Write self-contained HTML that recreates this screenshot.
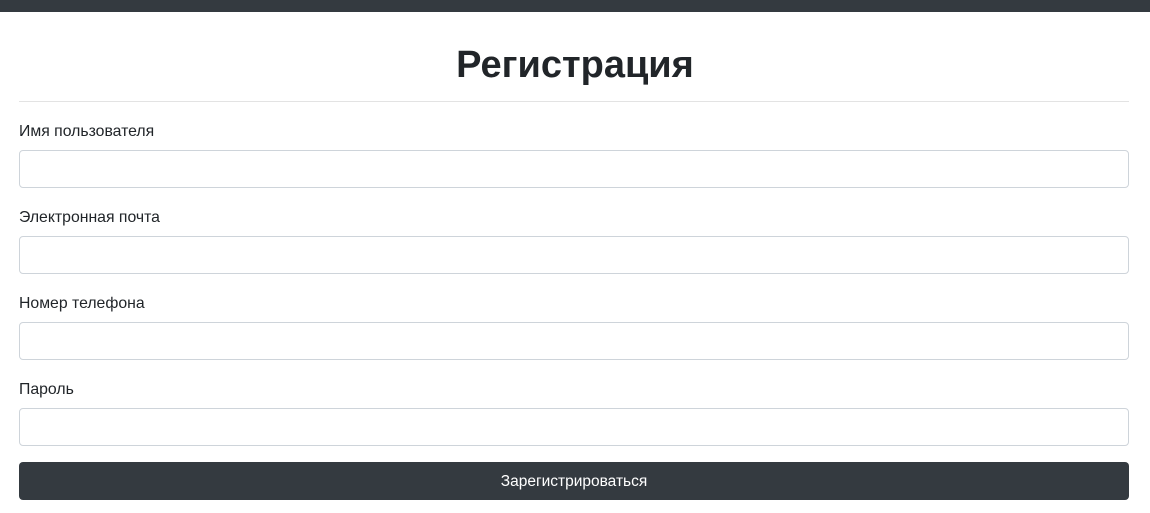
<!DOCTYPE html>
<html><head><meta charset="utf-8"><style>
body{margin:0;width:1150px;height:513px;background:#fff;font-family:"Liberation Sans",sans-serif;color:#212529;overflow:hidden;position:relative}
.bar{position:absolute;left:0;top:0;width:1150px;height:12px;background:#343a40}
h1{position:absolute;left:0;width:1150px;top:41px;margin:0;text-align:center;font-size:38px;font-weight:bold;line-height:48px;letter-spacing:0}
.hr{position:absolute;left:19px;width:1110px;top:101px;height:1px;background:#e3e3e3}
.l{position:absolute;left:19px;font-size:15.8px;line-height:20px}
.i{position:absolute;left:19px;width:1108px;height:36px;border:1px solid #ced4da;border-radius:4px}
.b{position:absolute;left:19px;top:462px;width:1110px;height:38px;background:#343a40;border-radius:4px;color:#fff;font-size:15.5px;line-height:40px;text-align:center}
</style></head><body>
<div class="bar"></div>
<h1>Регистрация</h1>
<div class="hr"></div>
<div class="l" style="top:122px">Имя пользователя</div><div class="i" style="top:150px"></div>
<div class="l" style="top:208px">Электронная почта</div><div class="i" style="top:236px"></div>
<div class="l" style="top:294px">Номер телефона</div><div class="i" style="top:322px"></div>
<div class="l" style="top:380px">Пароль</div><div class="i" style="top:408px"></div>
<div class="b">Зарегистрироваться</div>
</body></html>
